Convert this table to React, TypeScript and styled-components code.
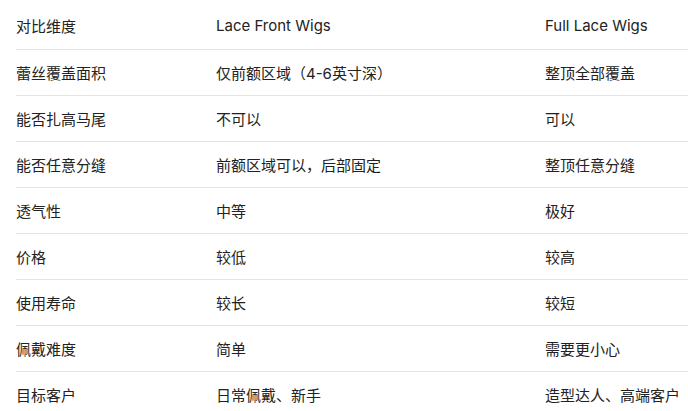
import React from 'react';
import styled, { createGlobalStyle } from 'styled-components';

const GlobalStyle = createGlobalStyle`
  html, body {
    margin: 0;
    padding: 0;
    background: #ffffff;
    overflow: hidden;
  }
  body {
    font-family: Inter, "Noto Sans CJK SC", sans-serif;
  }
`;

const Wrapper = styled.div`
  padding: 3px 0 0 16px;
  width: 900px;
`;

const Table = styled.table`
  border-collapse: collapse;
  table-layout: fixed;
  width: 860px;
  color: #222222;
  font-size: 15px;
`;

const Col = styled.col<{ $w: number }>`
  width: ${(p) => p.$w}px;
`;

const Row = styled.tr`
  height: 46px;
  border-bottom: 1px solid #e3e3e3;
`;

const HeadCell = styled.th`
  text-align: left;
  font-weight: 400;
  padding: 0;
  vertical-align: middle;
`;

const Cell = styled.td`
  padding: 0;
  vertical-align: middle;
`;

const rows: [string, string, string][] = [
  ['蕾丝覆盖面积', '仅前额区域（4-6英寸深）', '整顶全部覆盖'],
  ['能否扎高马尾', '不可以', '可以'],
  ['能否任意分缝', '前额区域可以，后部固定', '整顶任意分缝'],
  ['透气性', '中等', '极好'],
  ['价格', '较低', '较高'],
  ['使用寿命', '较长', '较短'],
  ['佩戴难度', '简单', '需要更小心'],
  ['目标客户', '日常佩戴、新手', '造型达人、高端客户'],
];

const App = () => (
  <Wrapper>
    <GlobalStyle />
    <Table>
      <colgroup>
        <Col $w={200} />
        <Col $w={329} />
        <Col $w={331} />
      </colgroup>
      <thead>
        <Row>
          <HeadCell>对比维度</HeadCell>
          <HeadCell>Lace Front Wigs</HeadCell>
          <HeadCell>Full Lace Wigs</HeadCell>
        </Row>
      </thead>
      <tbody>
        {rows.map((r) => (
          <Row key={r[0]}>
            <Cell>{r[0]}</Cell>
            <Cell>{r[1]}</Cell>
            <Cell>{r[2]}</Cell>
          </Row>
        ))}
      </tbody>
    </Table>
  </Wrapper>
);

export default App;
